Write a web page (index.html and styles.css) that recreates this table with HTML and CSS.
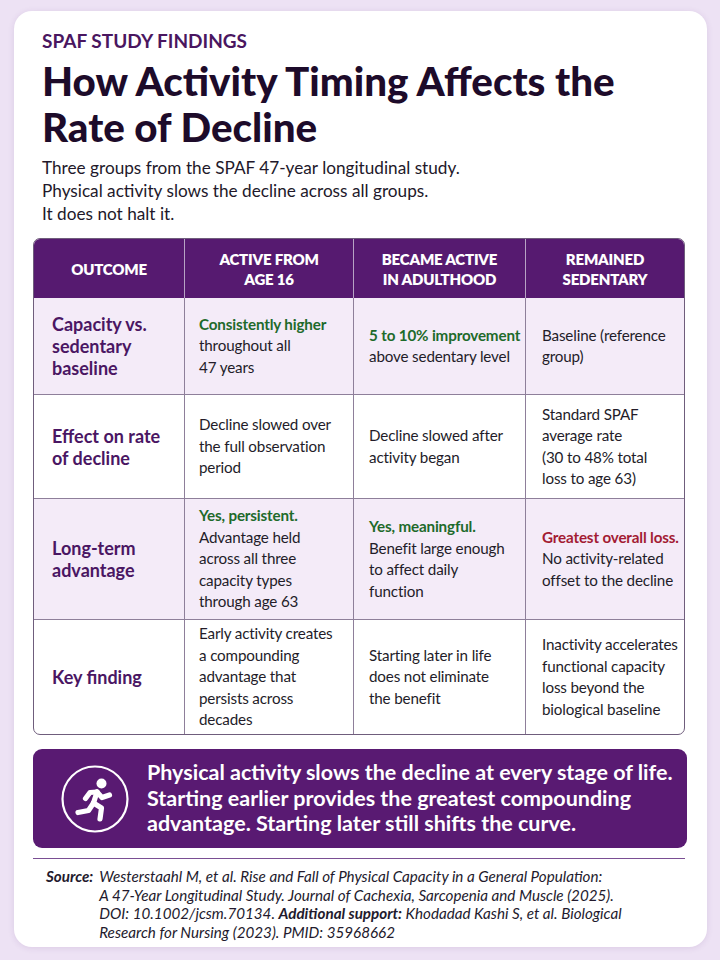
FILE: index.html
```html
<!DOCTYPE html>
<html lang="en">
<head>
<meta charset="utf-8">
<title>SPAF Study Findings</title>
<link rel="stylesheet" href="styles.css">
</head>
<body>
<main class="card">
  <header class="intro">
    <div class="eyebrow">SPAF STUDY FINDINGS</div>
    <h1 class="title">How Activity Timing Affects the<br>Rate of Decline</h1>
    <p class="lede">Three groups from the SPAF 47-year longitudinal study.<br>Physical activity slows the decline across all groups.<br>It does not halt it.</p>
  </header>

  <table class="grid">
    <colgroup>
      <col class="c1"><col class="c2"><col class="c3"><col class="c4">
    </colgroup>
    <thead>
      <tr>
        <th>OUTCOME</th>
        <th>ACTIVE FROM<br>AGE 16</th>
        <th>BECAME ACTIVE<br>IN ADULTHOOD</th>
        <th>REMAINED<br>SEDENTARY</th>
      </tr>
    </thead>
    <tbody>
      <tr class="r1 tint">
        <th>Capacity vs.<br>sedentary<br>baseline</th>
        <td><span class="good">Consistently higher</span><br>throughout all<br>47 years</td>
        <td><span class="good">5 to 10% improvement</span><br>above sedentary level</td>
        <td>Baseline (reference<br>group)</td>
      </tr>
      <tr class="r2">
        <th>Effect on rate<br>of decline</th>
        <td>Decline slowed over<br>the full observation<br>period</td>
        <td>Decline slowed after<br>activity began</td>
        <td>Standard SPAF<br>average rate<br>(30 to 48% total<br>loss to age 63)</td>
      </tr>
      <tr class="r3 tint">
        <th>Long-term<br>advantage</th>
        <td><span class="good">Yes, persistent.</span><br>Advantage held<br>across all three<br>capacity types<br>through age 63</td>
        <td><span class="good">Yes, meaningful.</span><br>Benefit large enough<br>to affect daily<br>function</td>
        <td><span class="bad">Greatest overall loss.</span><br>No activity-related<br>offset to the decline</td>
      </tr>
      <tr class="r4">
        <th>Key finding</th>
        <td>Early activity creates<br>a compounding<br>advantage that<br>persists across<br>decades</td>
        <td>Starting later in life<br>does not eliminate<br>the benefit</td>
        <td>Inactivity accelerates<br>functional capacity<br>loss beyond the<br>biological baseline</td>
      </tr>
    </tbody>
  </table>

  <section class="banner">
    <svg class="icon" viewBox="0 0 68 68" width="68" height="68" aria-hidden="true">
      <circle cx="34" cy="34" r="32.5" fill="none" stroke="#fff" stroke-width="2.2"/>
      <circle cx="40.5" cy="18.5" r="5" fill="#fff"/>
      <g fill="none" stroke="#fff" stroke-width="5.2" stroke-linecap="round" stroke-linejoin="round">
        <path d="M36 27 L32.5 38"/>
        <path d="M36 27 L29 27.5 L24.5 33.5"/>
        <path d="M36 27 L41 32.5 L48.5 30"/>
        <path d="M32.5 38 L27.5 45.5 L17 47.5"/>
        <path d="M32.5 38 L40.5 43 L39 54"/>
      </g>
    </svg>
    <p class="banner-text">Physical activity slows the decline at every stage of life.<br>Starting earlier provides the greatest compounding<br>advantage. Starting later still shifts the curve.</p>
  </section>

  <footer class="source">
    <span class="src-label">Source:</span>
    <p class="src-text">Westerstaahl M, et al. Rise and Fall of Physical Capacity in a General Population:<br>A 47-Year Longitudinal Study. Journal of Cachexia, Sarcopenia and Muscle (2025).<br>DOI: 10.1002/jcsm.70134. <b>Additional support:</b> Khodadad Kashi S, et al. Biological<br>Research for Nursing (2023). PMID: 35968662</p>
  </footer>
</main>
</body>
</html>
```

FILE: styles.css
```css
* { box-sizing: border-box; }

html, body {
  margin: 0;
  padding: 0;
}

body {
  background: #ede2f4;
  font-family: "Lato", "Liberation Sans", sans-serif;
  color: #1f1726;
  width: 720px;
  height: 960px;
  padding: 11px 13px 13px 14px;
}

.card {
  background: #ffffff;
  border-radius: 18px;
  box-shadow: 0 1px 6px rgba(90, 40, 120, 0.12);
  height: 936px;
  padding: 18px 0 0 19px;
}

.intro {
  padding-left: 9px;
}

.eyebrow {
  font-size: 19px;
  font-weight: 700;
  color: #4a1660;
  line-height: 24px;
  white-space: nowrap;
}

.title {
  margin: 5px 0 0 0;
  font-size: 40.3px;
  line-height: 46px;
  font-weight: 900;
  color: #1d0b2a;
  white-space: nowrap;
}

.lede {
  margin: 6px 0 0 0;
  font-size: 17.2px;
  line-height: 23px;
  color: #22182a;
  white-space: nowrap;
}

.grid {
  margin-top: 13px;
  width: 650px;
  table-layout: fixed;
  border-collapse: separate;
  border-spacing: 0;
  border: 1px solid #6f5d7c;
  border-radius: 7px;
  overflow: hidden;
  font-size: 15.2px;
  letter-spacing: -0.15px;
  line-height: 21.5px;
  white-space: nowrap;
}

col.c1 { width: 150px; }
col.c2 { width: 169px; }
col.c3 { width: 172px; }
col.c4 { width: 159px; }

.grid thead th {
  background: #561a70;
  color: #ffffff;
  font-size: 15px;
  letter-spacing: -0.2px;
  font-weight: 800;
  line-height: 20px;
  height: 59px;
  text-align: center;
  vertical-align: middle;
  padding: 0 2px;
  border-left: 1px solid #b7a3c4;
}

.grid thead th:first-child { border-left: none; }

.grid tbody th,
.grid tbody td {
  border-top: 1px solid #8e7f9a;
  border-left: 1px solid #8e7f9a;
  vertical-align: middle;
  text-align: left;
}

.grid tbody tr:first-child th,
.grid tbody tr:first-child td { border-top: none; }

.grid tbody th {
  border-left: none;
  color: #4a1663;
  font-size: 18px;
  letter-spacing: 0;
  line-height: 22px;
  font-weight: 700;
  padding: 0 2px 0 18px;
}

.grid tbody td {
  padding: 0 2px 0 14px;
  color: #231c29;
}

.grid tbody td:nth-child(3) { padding-left: 15px; }
.grid tbody td:nth-child(4) { padding-left: 16px; }

.tint th, .tint td { background: #f4ebf8; }

.r1 th, .r1 td { height: 96px; }
.r2 th, .r2 td { height: 104px; }
.r3 th, .r3 td { height: 121px; }
.r4 th, .r4 td { height: 115px; }

.good { color: #1e6a2b; font-weight: 700; }
.bad { color: #a31b33; font-weight: 700; }

.banner {
  margin-top: 14px;
  width: 654px;
  height: 99px;
  background: #591a72;
  border-radius: 9px;
  display: flex;
  align-items: center;
  padding: 0 0 0 28px;
  gap: 18px;
}

.icon { flex: none; }

.banner-text {
  margin: 0;
  color: #ffffff;
  font-size: 21.5px;
  line-height: 25.5px;
  font-weight: 700;
  white-space: nowrap;
}

.source {
  margin-top: 10px;
  width: 652px;
  border-top: 1.5px solid #7a4e93;
  padding: 8px 0 0 13px;
  display: flex;
  gap: 6px;
  font-style: italic;
  font-size: 15.2px;
  line-height: 18.5px;
  color: #231a2d;
}

.src-label { font-weight: 700; flex: none; }

.src-text { margin: 0; white-space: nowrap; }
.src-text b { font-weight: 700; }
```
